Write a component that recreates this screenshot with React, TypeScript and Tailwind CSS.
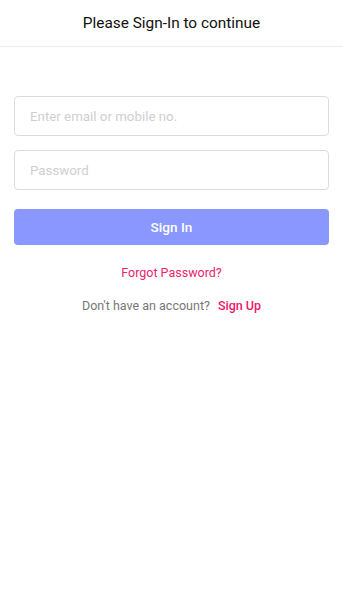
export default function App() {
  return (
    <div className="min-h-[592px] bg-white font-['Roboto',sans-serif]">
      <header className="h-[47px] flex items-center justify-center border-b border-[#ebe9fc]">
        <h1 className="mt-[2px] text-[15.4px] text-[#111] leading-none">Please Sign-In to continue</h1>
      </header>
      <form className="px-[14px] pt-[49px] flex flex-col" onSubmit={(e) => e.preventDefault()}>
        <input
          type="text"
          placeholder="Enter email or mobile no."
          className="h-[40px] rounded-[4px] border border-[#dcdcdc] px-[15px] text-[13.3px] text-[#333] placeholder:text-[#cfcfcf] outline-none"
        />
        <input
          type="password"
          placeholder="Password"
          className="mt-[14px] h-[40px] rounded-[4px] border border-[#dcdcdc] px-[15px] text-[13.3px] text-[#333] placeholder:text-[#cfcfcf] outline-none"
        />
        <button
          type="submit"
          className="mt-[19px] h-[36px] rounded-[4px] bg-[#8997ff] text-white text-[13.6px] font-medium"
        >
          Sign In
        </button>
        <a className="mt-[19px] text-center text-[12.5px] text-[#f0216e]">Forgot Password?</a>
        <p className="mt-[14px] text-center text-[12.5px] text-[#777]">
          Don't have an account?
          <a className="ml-[8px] text-[#f0166b] font-medium">Sign Up</a>
        </p>
      </form>
    </div>
  );
}
